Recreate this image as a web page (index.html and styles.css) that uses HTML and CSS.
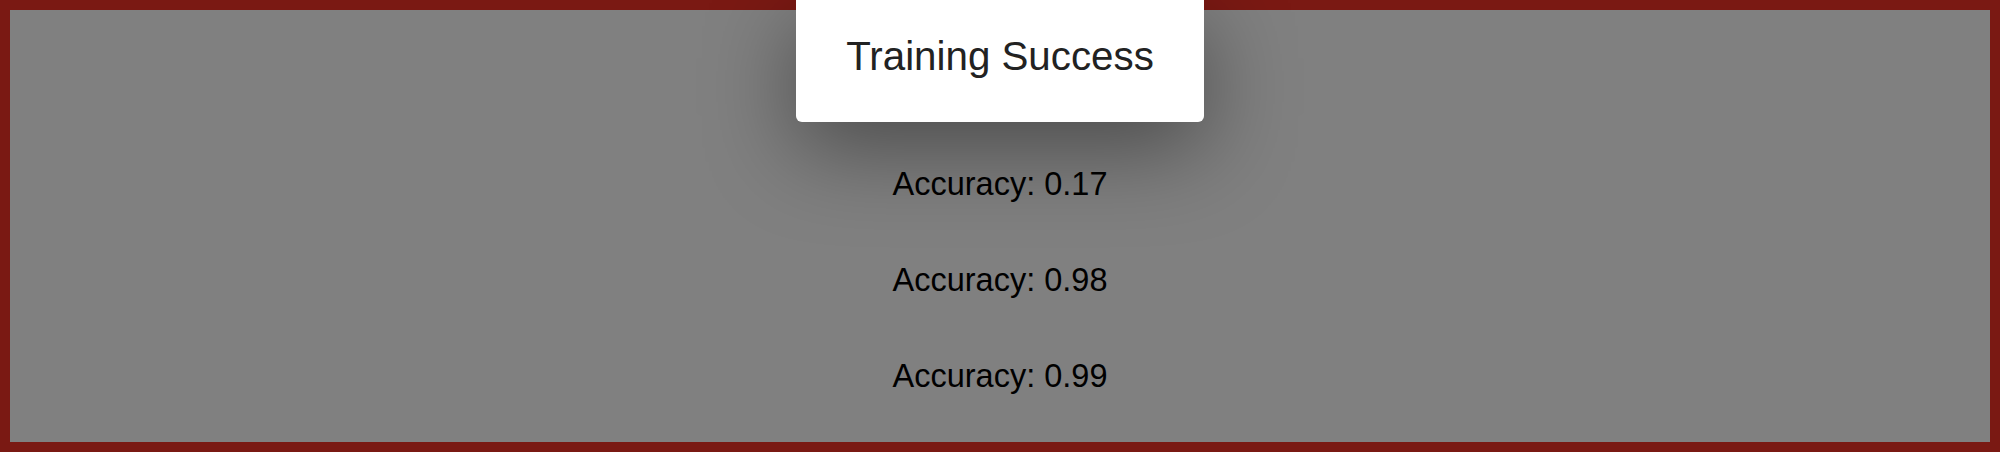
FILE: index.html
```html
<!DOCTYPE html>
<html>
<head>
<meta charset="utf-8">
<link rel="stylesheet" href="styles.css">
</head>
<body>
<div class="page">
  <div class="results">
    <p class="acc">Accuracy: 0.17</p>
    <p class="acc">Accuracy: 0.98</p>
    <p class="acc">Accuracy: 0.99</p>
  </div>
  <div class="modal">
    <div class="modal-title">Training Success</div>
  </div>
</div>
</body>
</html>
```

FILE: styles.css
```css
html, body {
  margin: 0;
  padding: 0;
}
body {
  width: 2000px;
  height: 452px;
  overflow: hidden;
  font-family: "Liberation Sans", Arial, sans-serif;
}
.page {
  position: relative;
  box-sizing: border-box;
  width: 2000px;
  height: 452px;
  border: 10px solid #7a1913;
  background: #808080;
}
.results {
  display: flex;
  flex-direction: column;
  align-items: center;
  gap: 59px;
  padding-top: 156px;
}
.acc {
  margin: 0;
  font-size: 32.5px;
  line-height: 37px;
  color: #000;
}
.modal {
  position: absolute;
  top: -10px;
  left: 50%;
  transform: translateX(-50%);
  box-sizing: border-box;
  width: 408px;
  height: 122px;
  padding-top: 34px;
  background: #fff;
  border-radius: 0 0 6px 6px;
  box-shadow: 0 26px 90px rgba(0, 0, 0, 0.42);
  text-align: center;
}
.modal-title {
  font-size: 40.3px;
  line-height: 46px;
  color: #222;
}
```
